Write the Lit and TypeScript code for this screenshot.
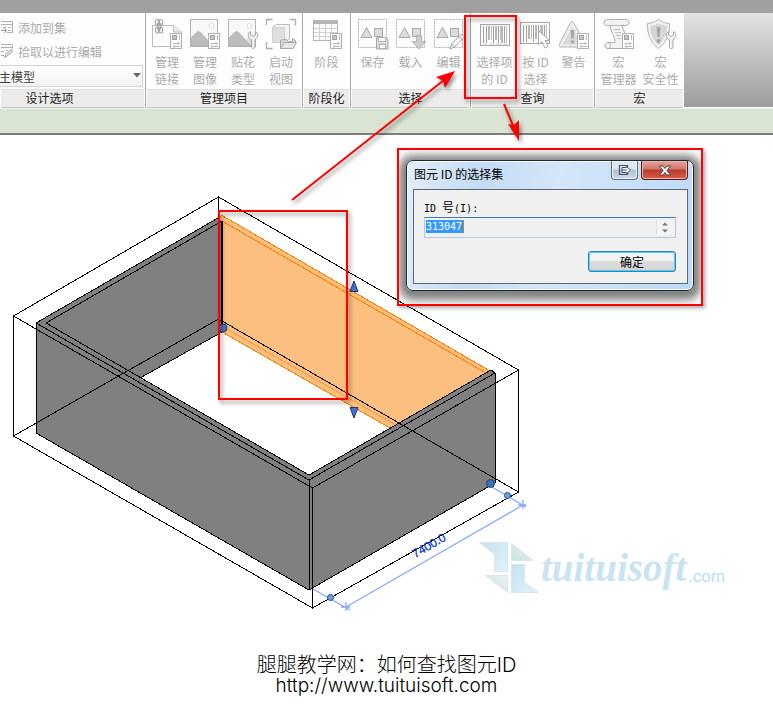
import { LitElement, html, svg, css } from "lit";
import { customElement } from "lit/decorators.js";

const badge = svg`
  <rect x="19.5" y="15.5" width="11" height="15" fill="#fff" stroke="#b0b0b0"/>
  <rect x="21.5" y="17.5" width="4" height="4" fill="#c4c4c4" stroke="#a2a2a2"/>
  <path d="M28.5 17v5" stroke="#b8b8b8"/>
  <path d="M21.5 25.5h6m-4 3h6M26.5 24l2 1.5-2 1.5M24 27l-2 1.500 2 1.500" fill="none" stroke="#a6a6a6" stroke-width=".8"/>`;

const wrench = svg`
  <path d="M23.500 13.500v3.500l2.500 1.500 2.500-1.500v-3.500c3 1.500 3 6.500 0 7.500l-.5 1v7c0 2-3.500 2-3.500 0v-7l-1-1c-3-1.500-3-6 0-7.500z" fill="#f2f2f2" stroke="#a6a6a6"/>`;

const picture = svg`
  <rect x="1.500" y="1.500" width="27" height="27" fill="#f8f8f8" stroke="#b4b4b4"/>
  <circle cx="22.500" cy="8" r="2.500" fill="#fff" stroke="#dcdcdc"/>
  <path d="M14 28l8-9q2-1 3 1l3 3v5z" fill="#dedede"/>
  <path d="M2 20l5-5q2.500-3 5 0l12 13H2z" fill="#bdbdbd" stroke="#acacac" stroke-width=".7"/>`;

const selection = svg`
  <rect x="1.500" y="1.500" width="28" height="28" fill="none" stroke="#b2b2b2" stroke-dasharray="2 1"/>
  <path d="M9.500 9.500l5.500 10h-11z" fill="#dcdcdc" stroke="#a8a8a8"/>
  <rect x="17.500" y="10.500" width="8" height="8" fill="#dcdcdc" stroke="#a8a8a8"/>`;

const bars = svg`
  <path d="M4.500 3v17M7.500 3v17M14.500 3v17M19.500 3v17M25.500 3v17" stroke="#a2a2a2"/>
  <path d="M10 3v14M17 3v14M23 3v17" stroke="#b8b8b8" stroke-width="2"/>
  <path d="M12.500 3v14M21.500 3v14M27.500 3v17" stroke="#c2c2c2"/>`;

const icons = {
  links: svg`
    <path d="M1.500 7.500h21l8 6.500v14.500h-29z" fill="#fcfcfc" stroke="#bdbdbd"/>
    <path d="M22.500 7.500v6.500h8" fill="#eee" stroke="#bdbdbd"/>
    <g fill="none" stroke="#a6a6a6" stroke-width="1.200">
      <rect x="4.500" y="1.500" width="4" height="6" rx="2"/><rect x="7.500" y="1.500" width="4" height="6" rx="2"/>
      <rect x="4.500" y="9" width="4" height="6" rx="2"/><rect x="7.500" y="9" width="4" height="6" rx="2"/>
      <path d="M6.500 5v6.500M9.500 5v6.500"/>
    </g>${badge}`,
  images: svg`${picture}${badge}`,
  decals: svg`${picture}${wrench}`,
  view: svg`
    <path d="M1.500 7v-5.500h6M25 1.500h5.500v6M1.500 24v6.500h6" fill="none" stroke="#adadad" stroke-width="1.300"/>
    <path d="M7.500 9.500l4-3h13v14l-5 4h-12z" fill="#f4f4f4" stroke="#bbb"/>
    <path d="M7.500 9.500h12v15h-12z" fill="#dfdfdf" stroke="#d0d0d0"/>
    <path d="M15.500 30.500v-8l2-1h4l2 2h4v-3l3 2v3l-3 5z" fill="#d4d4d4" stroke="#aaa"/>
    <path d="M15.500 30.500l4-6h12l-3.500 6z" fill="#e6e6e6" stroke="#aaa"/>`,
  phases: svg`
    <rect x="2.500" y="2.500" width="24" height="20" fill="#fbfbfb" stroke="#b6b6b6"/>
    <rect x="2" y="2" width="25" height="4" fill="#b4b4b4"/>
    <path d="M3 10.500h23M3 14.500h23M3 18.500h23M8.500 6v16M14.500 6v16M20.500 6v16" stroke="#d2d2d2"/>${badge}`,
  save: svg`${selection}
    <path d="M19.500 19.500h9l2.500 2v9.500h-11.500z" fill="#dcdcdc" stroke="#a6a6a6"/>
    <rect x="21.500" y="19.500" width="7" height="4" fill="#fff" stroke="#b8b8b8"/>
    <rect x="22.500" y="26.500" width="6" height="4" fill="#fff" stroke="#b0b0b0"/>`,
  load: svg`${selection}
    <path d="M21.500 17.500h5v6h4.500l-7 7.500-7-7.500h4.500z" fill="#cecece" stroke="#a8a8a8" stroke-width=".8"/>`,
  edit: svg`${selection}
    <path d="M17 31l1.500-5 10-10 3 3-10 10z" fill="#f4f4f4" stroke="#a4a4a4"/>
    <path d="M18.500 26l3 3M26 18.500l3 3" stroke="#a4a4a4"/>`,
  ids: svg`
    <rect x="1.500" y="6.500" width="29" height="21" fill="#fafafa" stroke="#a6a6a6"/>
    <g transform="translate(0 5)">${bars}</g>
    <path d="M4 26h4M11 26h4M17 26h5M24 26h4" stroke="#c8c8c8"/>`,
  byId: svg`
    <rect x=".5" y="4.500" width="29" height="21" fill="#fafafa" stroke="#a6a6a6"/>
    <g transform="translate(-1 4)">${bars}</g>
    <path d="M18.500 12.500v14l3.500-3 3 6.500 3-1.500-3-6h4.500z" fill="#fff" stroke="#a8a8a8"/>`,
  warnings: svg`
    <path d="M12 5.500q2-3.500 4 0l11.500 20.500q1 3-2 3h-22.500q-3 0-1.500-3z" fill="#eee" stroke="#b4b4b4"/>
    <path d="M14 9l9.500 17.500h-19z" fill="#dadada"/>
    <path d="M12.500 12h4l-1 9h-2z" fill="#a8a8a8"/><circle cx="14.500" cy="24" r="1.800" fill="#a8a8a8"/>${badge}`,
  macros: svg`
    <path d="M5.500 1.500h17q4 0 3.500 4-.5 2-4 2h-3q1 4 3 8 3 6 3 12 0 3-3 3h-18q-3-1-2-4 1-2 4-2h6q0-4-2-8-3-6-3-9h-3.500q-2.500-.5-2.500-3 .5-3 2.500-3z" fill="#f2f2f2" stroke="#aeaeae"/>
    <path d="M5.500 7.500h14M4 24.500q4 0 3.500 3l-1 3" fill="none" stroke="#b8b8b8"/>
    <path d="M11 11.500h6M12 14.500h6M13 17.500h5M14 20.500h4" stroke="#c0c0c0"/>${badge}`,
  security: svg`
    <path d="M13.500 1.500q4 4 11 4 1 16-11 25-12-9-11-25 7 0 11-4z" fill="#f4f4f4" stroke="#b4b4b4"/>
    <path d="M13.500 5q4 3 8.500 3 0 12-8.500 19-8.500-7-8.500-19 4.500 0 8.500-3z" fill="#d6d6d6"/>
    <path d="M11.500 9h4l-1 10h-2z" fill="#a6a6a6"/><circle cx="13.500" cy="23" r="2" fill="#a6a6a6"/>
    ${wrench}`,
};

type Tool = { icon: unknown; lines: string[]; size?: string };
type Panel = { title: string; name: string; tools: Tool[] };

const panels: Panel[] = [
  { title: "管理项目", name: "project", tools: [
    { icon: icons.links, lines: ["管理", "链接"] },
    { icon: icons.images, lines: ["管理", "图像"] },
    { icon: icons.decals, lines: ["贴花", "类型"] },
    { icon: icons.view, lines: ["启动", "视图"] },
  ] },
  { title: "阶段化", name: "phasing", tools: [{ icon: icons.phases, lines: ["阶段"] }] },
  { title: "选择", name: "select", tools: [
    { icon: icons.save, lines: ["保存"] },
    { icon: icons.load, lines: ["载入"] },
    { icon: icons.edit, lines: ["编辑"] },
  ] },
  { title: "查询", name: "query", tools: [
    { icon: icons.ids, lines: ["选择项", "的 ID"], size: "wide" },
    { icon: icons.byId, lines: ["按 ID", "选择"] },
    { icon: icons.warnings, lines: ["警告"] },
  ] },
  { title: "宏", name: "macro", tools: [
    { icon: icons.macros, lines: ["宏", "管理器"], size: "mid" },
    { icon: icons.security, lines: ["宏", "安全性"], size: "mid" },
  ] },
];

@customElement("ribbon-bar")
export class RibbonBar extends LitElement {
  static styles = css`
    :host { display: flex; height: 95px; background: #fff; }
    .panel { display: flex; flex-direction: column; flex: none; box-sizing: border-box; border-right: 1px solid #a9a9a9; padding: 0 1px; background: #fdfdfd; }
    .tools { display: flex; flex: 1; justify-content: center; padding-top: 5px; }
    .title { flex: none; height: 17px; line-height: 16px; background: #ececec; border-top: 1px solid #dedede; border-bottom: 1px solid #c8c8c8; text-align: center; font-size: 12px; font-weight: 400; margin: 0; color: #222; }
    .options { width: 146px; overflow: hidden; }
    .options .title { padding-right: 46px; }
    .project { width: 157px; }
    .phasing { width: 48px; }
    .select { width: 120px; }
    .query { width: 124px; }
    .macro { width: 89px; border-right: 0; }
    button { font: inherit; border: 0; background: none; padding: 0; color: #ababab; }
    .tool { width: 38px; display: flex; flex-direction: column; align-items: center; white-space: nowrap; }
    .wide { width: 44px; }
    .mid { width: 42px; }
    .tool svg { width: 32px; height: 32px; margin-bottom: 3px; flex: none; }
    .line { line-height: 17px; font-size: 12px; }
    .rows { flex: 1; display: flex; flex-direction: column; align-items: flex-start; padding-top: 2px; }
    .row { display: flex; align-items: center; height: 24px; gap: 5px; }
    .row svg { width: 12px; height: 16px; }
    .model { appearance: none; font: inherit; width: 100%; height: 22px; margin: 2px 0 0; padding: 0; border: 1px solid #d4d4d4; border-left: 0; border-radius: 0; color: #444; background: linear-gradient(#fff, #f2f2f2); }
    .pick { position: relative; width: 144px; margin-left: -2px; }
    .pick svg { position: absolute; right: 2px; top: 10px; width: 8px; height: 5px; pointer-events: none; }
    .rest { flex: 1; background: linear-gradient(#e2e2e2, #9c9c9c); margin-bottom: 1px; }
  `;
  render() {
    return html`
      <section class="panel options">
        <div class="rows">
          <button class="row" disabled>
            <svg viewBox="0 0 12 16"><path d="M0 2.500h11.500v11H6M0 5.500h11M2 8.500h3m2 0h3M0 11.500h3m4 0h3" fill="none" stroke="#b0b0b0"/><path d="M0 11.500h5m-2-2.500l2.500 2.500L3 14" fill="none" stroke="#999"/></svg>添加到集
          </button>
          <button class="row" disabled>
            <svg viewBox="0 0 12 16"><path d="M0 1.500h11.500v4M0 4.500h11M0 8.500h3m2-1h2M0 12.500h3" fill="none" stroke="#b0b0b0"/><path d="M3.500 14.500l1-3 6-5 1 2-6 5z" fill="#eee" stroke="#999"/></svg>拾取以进行编辑
          </button>
          <div class="pick">
            <select class="model" aria-label="设计选项"><option>主模型</option></select>
            <svg viewBox="0 0 8 5"><path d="M0 0h8L4 4.500z" fill="#666"/></svg>
          </div>
        </div>
        <h2 class="title">设计选项</h2>
      </section>
      ${panels.map((p) => html`
        <section class="panel ${p.name}">
          <div class="tools">
            ${p.tools.map((t) => html`
              <button class="tool ${t.size ?? ""}" disabled>
                <svg viewBox="0 0 32 32">${t.icon}</svg>
                ${t.lines.map((l) => html`<span class="line">${l}</span>`)}
              </button>`)}
          </div>
          <h2 class="title">${p.title}</h2>
        </section>`)}
      <div class="rest"></div>`;
  }
}

@customElement("id-dialog")
export class IdDialog extends LitElement {
  static styles = css`
    :host { display: block; box-sizing: border-box; border: 1px solid #22282e; border-radius: 7px; background: linear-gradient(100deg, #e3eefa 0, #c3dbf3 25%, #d4e6f8 50%, #bcdaf8 100%); box-shadow: inset 0 0 0 1px #f4faff, 0 2px 8px 7px rgba(0, 0, 0, .5); font-size: 12px; color: #000; }
    .bar { display: flex; height: 28px; padding: 0 5px 0 7px; }
    .name { flex: 1; margin: 0; font-size: 12px; font-weight: 400; line-height: 26px; }
    button { font: inherit; padding: 0; }
    .control { display: grid; place-items: center; height: 19px; width: 27px; border: 1px solid #5f6f7f; border-top: 0; border-radius: 0 0 4px 4px; background: linear-gradient(#dce6f0 45%, #b0c0d2 50%, #ccdcec); box-shadow: inset 0 0 0 1px #eef4fa; }
    .close { width: 47px; margin-left: 3px; border-color: #5a1a18; background: linear-gradient(#e2a498 0, #d2766a 45%, #b83c2c 50%, #d8604a); box-shadow: inset 0 0 0 1px #e6b4ac; }
    .body { margin: 0 5px 6px 6px; box-sizing: border-box; border: 1px solid #5c6874; background: #f0f0f0; padding: 10px 11px 11px 10px; display: flex; flex-direction: column; }
    label { line-height: 14px; font-family: "DejaVu Sans Mono", "Noto Sans CJK SC", monospace; font-size: 10px; white-space: pre; height: 14px; }
    .cjk { font-family: "Noto Sans CJK SC", sans-serif; font-size: 12px; }
    .field { display: flex; box-sizing: border-box; height: 21px; margin-top: 3px; border: 1px solid #aecbe3; border-top-color: #3d7bad; padding: 2px 2px 2px 1px; }
    input { width: 38px; height: 13px; box-sizing: border-box; padding: 0; border: 0; border-right: 1px solid #d07a20; border-radius: 0; background: #3399ff; color: #fff; font: 10px/13px "DejaVu Sans Mono", monospace; outline: 0; }
    .spin { margin-left: auto; display: flex; flex-direction: column; width: 16px; border-left: 1px solid #e0e0e0; background: #f4f4f4; }
    .spin button { flex: 1; border: 0; background: none; display: grid; place-items: center; min-height: 0; }
    .ok { align-self: flex-end; width: 88px; height: 21px; margin-top: 13px; border: 1px solid #3c7fb1; border-radius: 3px; background: linear-gradient(#f2f2f2 45%, #dcdcdc 50%, #d0d4d6); box-shadow: inset 0 0 0 1px #45d0f4; line-height: 17px; }
  `;
  render() {
    return html`
      <header class="bar">
        <h1 class="name">图元 ID 的选择集</h1>
        <button class="control" aria-label="Dock"><svg width="14" height="12" viewBox="0 0 14 12"><path d="M9.500 3V1.500h-8v9h8V9" fill="none" stroke="#4b5563" stroke-width="1.200"/><path d="M4 3.500h4.500V2.500L12.500 6 8.500 9.500V8.500H4zM4 6h5" fill="#fff" stroke="#4b5563"/></svg></button>
        <button class="control close" aria-label="Close"><svg width="14" height="11" viewBox="0 0 14 11"><path d="M1.500 1h3.500l2 2.500L9 1h3.500L9 5.500l3.500 4.500H9L7 7.500 5 10H1.500L5 5.500z" fill="#fff" stroke="#5e3a3a"/></svg></button>
      </header>
      <div class="body">
        <label for="id">ID <span class="cjk">号</span>(I):</label>
        <div class="field">
          <input id="id" value="313047" />
          <div class="spin">
            <button aria-label="Up"><svg width="6" height="4" viewBox="0 0 6 4"><path d="M0 3.500L3 .5l3 3z" fill="#777"/></svg></button>
            <button aria-label="Down"><svg width="6" height="4" viewBox="0 0 6 4"><path d="M0 .5h6l-3 3z" fill="#777"/></svg></button>
          </div>
        </div>
        <button class="ok">确定</button>
      </div>`;
  }
}

@customElement("model-view")
export class ModelView extends LitElement {
  static styles = css`
    :host { display: block; }
    .scene { display: block; width: 100%; height: 484px; }
    .gray { fill: #808080; }
    .orange { fill: #fdbf80; }
    .ink { fill: none; stroke: #000; shape-rendering: crispEdges; }
    .hot { fill: none; stroke: #ff8000; shape-rendering: crispEdges; }
    .dim { fill: none; stroke: #86a9ff; stroke-width: 1.3; }
    .grip { fill: #3f73bd; stroke: #234069; }
    .node { fill: #69a5e6; stroke: #2c4c78; }
    .arrow { fill: #4472d4; stroke: #22366c; }
    .measure { font: 12px "Liberation Sans", sans-serif; fill: #0a3fc4; stroke: #0a3fc4; stroke-width: .3; text-anchor: middle; }
    .brand { font: italic bold 39px "Liberation Serif", serif; fill: #c9e3f1; }
    .tld { font: 17px "Liberation Sans", sans-serif; fill: #c9e3f1; stroke: #c9e3f1; stroke-width: .4; }
  `;
  render() {
    return html`
      <svg class="scene" viewBox="0 135 773 484" preserveAspectRatio="xMinYMin slice">
        <defs>
          <linearGradient id="ice" x1="0" y1="0" x2="1" y2="1"><stop offset="0" stop-color="#c6e2ee"/><stop offset="1" stop-color="#e0f2f8"/></linearGradient>
          <linearGradient id="mist" x1="0" y1="1" x2="1" y2="0"><stop offset="0" stop-color="#c8dfe2"/><stop offset="1" stop-color="#f0f2f3"/></linearGradient>
        </defs>
        <path class="gray" d="M36 323L222 216V332L140 378L309 475L390 428L486 373L491 370L495 373V483L309 590L36 433z"/>
        <path class="orange" d="M222 216L490 371L486 373L390 428L222 332z"/>
        <path class="orange" d="M222 215L217 218L222 221z"/>
        <path class="hot" d="M217 218L222 215.500L490 371M222 221L486 373M222 332L390 428"/>
        <path class="hot" opacity=".6" d="M225 328L396 425"/>
        <path class="ink" d="M218 218L36 323V433L309 590L495 483V373L491 370M36 323L309 480L495 373M222 221L46 323L309 475L491 370M309 480V590M140 378L222 332"/>
        <path class="ink" stroke-width="2" d="M222 221V328"/>
        <path class="ink" d="M218.500 197L13.500 316V436L312.500 608L518.500 492V370zM13.500 316L312.500 488L518.500 370M312.500 488V608M218.500 197V319L13.500 436M218.500 319L518.500 492"/>
        <path class="dim" d="M313 589L350 610M492 487L526 507M346 607L523 505M346 602V611M341 607H350M523 500V509M518 505H526"/>
        <circle class="grip" cx="223" cy="328" r="4"/><circle class="grip" cx="490.500" cy="483.500" r="4"/>
        <circle class="node" cx="507.500" cy="495.500" r="3"/><circle class="node" cx="330.500" cy="597.500" r="3"/>
        <path class="arrow" d="M354 281L358 291.500H350zM350 407.500H358L354 418z"/>
        <text class="measure" transform="translate(431 549) rotate(-30)">7400.0</text>
        <g stroke="#dbe6e8" stroke-linejoin="round">
          <path fill="url(#ice)" d="M479.500 542.500H507.500V571.500H494.500V554.500z"/>
          <path fill="url(#mist)" d="M511.500 543.500L533.500 560.500H511.500z"/>
          <path fill="url(#mist)" d="M485.500 575.500H507.500V592.500z"/>
          <path fill="url(#ice)" d="M511.500 564.500H524.500V582.500L538.500 592.500H511.500z"/>
        </g>
        <text class="brand" x="541" y="581">tuituisoft</text>
        <text class="tld" x="688" y="582">.com</text>
      </svg>`;
  }
}

@customElement("app-root")
export class AppRoot extends LitElement {
  static styles = css`
    :host { display: flex; flex-direction: column; position: relative; min-height: 100vh; background: #fff; overflow: hidden; font: 12px "Noto Sans CJK SC", "Liberation Sans", sans-serif; }
    .strip { height: 13px; background: #a0a0a0; flex: none; }
    .hint { height: 24px; flex: none; background: #d9e4d3; border-top: 1px solid #eef2ec; border-bottom: 2px solid #7c7f7a; }
    .canvas { position: relative; }
    .capture { position: absolute; left: 397px; top: 13px; width: 306px; box-sizing: border-box; border: 2px solid #f00; padding: 10px 7px 13px; overflow: hidden; box-shadow: 2px 2px 4px rgba(0, 0, 0, .35); }
    .caption { display: flex; flex-direction: column; align-items: center; padding-top: 35px; font: 300 20px/22px Inter, "Noto Sans CJK SC", sans-serif; color: #000; }
    .caption p { margin: 0; }
    .caption a { color: inherit; text-decoration: none; font-size: 19px; line-height: 20px; }
    .marks { position: absolute; left: 0; top: 0; width: 773px; height: 420px; pointer-events: none; filter: drop-shadow(2px 3px 2px rgba(0, 0, 0, .45)); }
    .frame { fill: none; stroke: #f00; stroke-width: 2; }
    .tip { fill: #f00; }
  `;
  render() {
    return html`
      <div class="strip"></div>
      <ribbon-bar></ribbon-bar>
      <div class="hint"></div>
      <main class="canvas">
        <model-view></model-view>
        <div class="capture"><id-dialog></id-dialog></div>
        <div class="caption">
          <p>腿腿教学网：如何查找图元ID</p>
          <a href="http://www.tuituisoft.com">http://www.tuituisoft.com</a>
        </div>
      </main>
      <svg class="marks" viewBox="0 0 773 420">
        <rect class="frame" x="465" y="16" width="51" height="82"/>
        <rect class="frame" x="219" y="211" width="128" height="188"/>
        <path class="frame" d="M292 200L444 80M504 104L514 128"/>
        <path class="tip" d="M455 71L436 77L443 81L445 88zM519 141L508 124L514 125L519 120z"/>
      </svg>`;
  }
}
